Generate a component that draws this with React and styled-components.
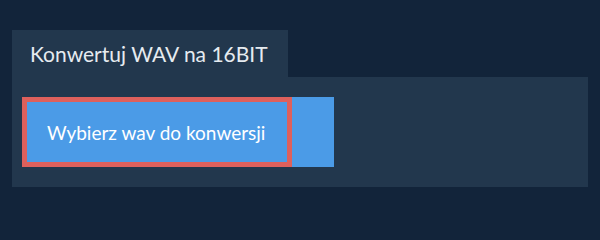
import React from "react";
import styled, { createGlobalStyle } from "styled-components";

const GlobalStyle = createGlobalStyle`
  html, body {
    margin: 0;
    padding: 0;
    background: #12243a;
    font-family: Lato, "Noto Sans", sans-serif;
  }
`;

const Page = styled.div`
  padding: 30px 12px 0;
`;

const Tab = styled.div`
  display: inline-block;
  background: #22374d;
  color: #e6ebf0;
  font-size: 21px;
  line-height: 47px;
  height: 47px;
  padding: 0 20px 0 18px;
`;

const Panel = styled.div`
  background: #22374d;
  height: 110px;
  padding: 20px 10px;
  box-sizing: border-box;
`;

const UploadButton = styled.button`
  display: flex;
  width: 312px;
  height: 70px;
  padding: 0;
  border: none;
  background: #4b9be7;
  cursor: pointer;
`;

const Label = styled.span`
  display: flex;
  align-items: center;
  box-sizing: border-box;
  width: 270px;
  height: 100%;
  padding-left: 20px;
  border: 5px solid ${(p) => p.$outline || "transparent"};
  color: #ffffff;
  font-family: Lato, "Noto Sans", sans-serif;
  font-size: 19px;
`;

export default function App() {
  return (
    <Page>
      <GlobalStyle />
      <Tab>Konwertuj WAV na 16BIT</Tab>
      <Panel>
        <UploadButton>
          <Label $outline="#de605c">Wybierz wav do konwersji</Label>
        </UploadButton>
      </Panel>
    </Page>
  );
}
